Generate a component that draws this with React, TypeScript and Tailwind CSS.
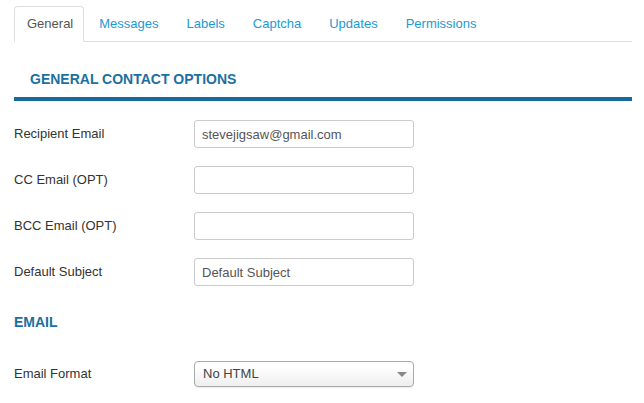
const tabs = ['General', 'Messages', 'Labels', 'Captcha', 'Updates', 'Permissions'];

const fields = [
  { label: 'Recipient Email', value: 'stevejigsaw@gmail.com' },
  { label: 'CC Email (OPT)', value: '' },
  { label: 'BCC Email (OPT)', value: '' },
  { label: 'Default Subject', value: 'Default Subject' },
];

export default function App() {
  return (
    <div className="min-h-[403px] w-[644px] bg-white font-['Liberation_Sans',Arial,sans-serif] text-[13px] text-[#333]">
      <div className="pl-[14px] pr-[12px] pt-[6px]">
        {/* tabs */}
        <ul className="flex border-b border-[#ddd]">
          {tabs.map((t, i) => (
            <li key={t} className="-mb-px mr-[2px]">
              {i === 0 ? (
                <span className="block h-[36px] rounded-t-[4px] border border-[#ddd] border-b-white bg-white pl-[12px] pr-[10px] leading-[34px] text-[#555]">
                  {t}
                </span>
              ) : (
                <span className="block h-[36px] border border-transparent px-[12px] leading-[34px] text-[#1a9ad6]">
                  {t}
                </span>
              )}
            </li>
          ))}
        </ul>

        {/* general contact options */}
        <h3 className="mt-[26px] pl-[16px] text-[14px] font-bold leading-[22px] text-[#1b6fa1]">
          GENERAL CONTACT OPTIONS
        </h3>
        <div className="mt-[7px] h-[4px] bg-[#15699c]" />

        <div className="mt-[19px] flex flex-col gap-[18px]">
          {fields.map((f) => (
            <div key={f.label} className="flex items-center">
              <label className="w-[180px]">{f.label}</label>
              <input
                readOnly
                value={f.value}
                className="h-[28px] w-[220px] rounded-[3px] border border-[#ccc] px-[7px] text-[13px] text-[#555] outline-none"
              />
            </div>
          ))}
        </div>

        {/* email */}
        <h3 className="mt-[25px] text-[14px] font-bold leading-[22px] text-[#1b6fa1]">EMAIL</h3>

        <div className="mt-[28px] flex items-center">
          <label className="w-[180px]">Email Format</label>
          <div className="relative flex h-[26px] w-[220px] items-center rounded-[4px] border border-[#aaa] bg-gradient-to-b from-white from-[20%] to-[#eee] pl-[8px] text-[#444] shadow-[0_1px_1px_rgba(0,0,0,0.08)]">
            No HTML
            <span className="absolute right-[6px] top-[10px] h-0 w-0 border-x-[5px] border-t-[5px] border-x-transparent border-t-[#888]" />
          </div>
        </div>
      </div>
    </div>
  );
}
